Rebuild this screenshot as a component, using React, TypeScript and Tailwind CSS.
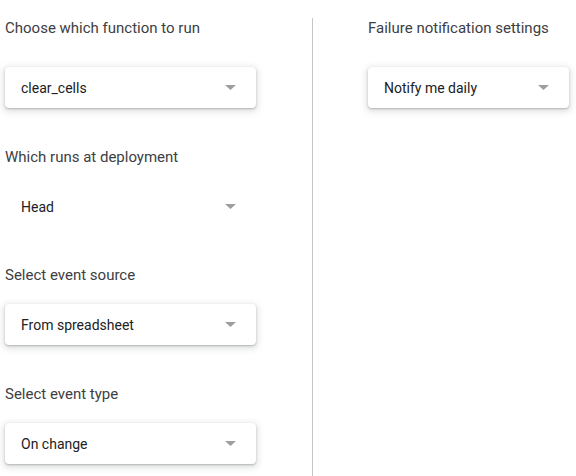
const leftFields = [
  { label: 'Choose which function to run', value: 'clear_cells', raised: true },
  { label: 'Which runs at deployment', value: 'Head', raised: false },
  { label: 'Select event source', value: 'From spreadsheet', raised: true },
  { label: 'Select event type', value: 'On change', raised: true },
];

function Caret() {
  return (
    <svg width="11" height="5" viewBox="0 0 11 5" className="shrink-0">
      <path d="M0 0h11L5.5 5z" fill="#9e9e9e" />
    </svg>
  );
}

function Select({ value, raised, width }: { value: string; raised: boolean; width: string }) {
  return (
    <div
      className={`${width} h-[41px] flex items-center justify-between pl-4 pr-5 rounded-[4px] bg-white ${
        raised ? 'shadow-[0_1px_2px_rgba(60,64,67,0.3),0_2px_6px_2px_rgba(60,64,67,0.15)]' : ''
      }`}
    >
      <span className="text-[14px] leading-[20px] pt-[1px] text-[#202124]">{value}</span>
      <Caret />
    </div>
  );
}

export default function App() {
  return (
    <div className="w-[576px] h-[476px] bg-white overflow-hidden font-['Roboto',sans-serif] pt-[18px]">
      <div className="flex h-full">
        {/* left column */}
        <div className="w-[313px] border-r border-[#c4c4c4] pl-[5px]">
          {leftFields.map((f, i) => (
            <div key={f.label} className="mb-[38.5px]">
              <div
                className={`text-[15px] leading-[20px] text-[#3c4043] ${
                  i === 0 ? 'mb-[29px]' : 'mb-[19px]'
                }`}
              >
                {f.label}
              </div>
              <Select value={f.value} raised={f.raised} width="w-[251px]" />
            </div>
          ))}
        </div>

        {/* right column */}
        <div className="pl-[55px]">
          <div className="text-[15px] leading-[20px] text-[#3c4043] mb-[29px]">
            Failure notification settings
          </div>
          <Select value="Notify me daily" raised width="w-[201px]" />
        </div>
      </div>
    </div>
  );
}
